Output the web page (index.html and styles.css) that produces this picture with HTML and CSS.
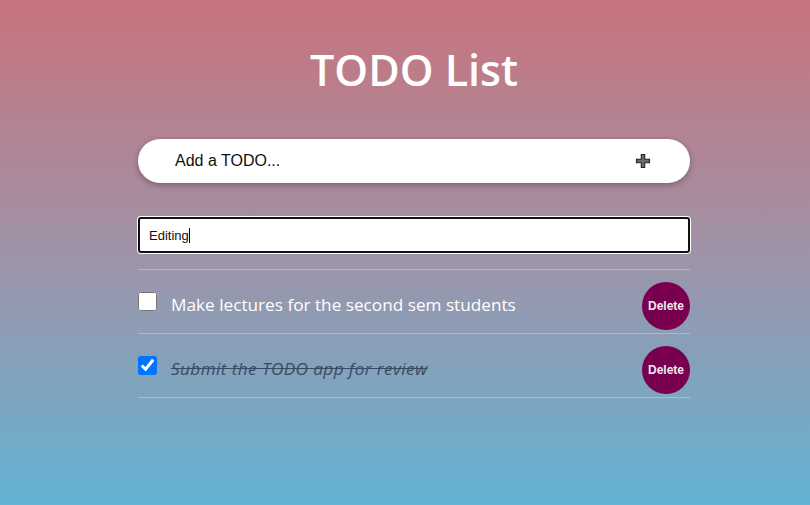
FILE: index.html
```html
<!DOCTYPE html>
<html>
<head>
<meta charset="utf-8">
<link rel="stylesheet" href="styles.css">
</head>
<body>
<div class="app">
  <h1 class="title">TODO List</h1>
  <div class="add-bar">
    <span class="add-text">Add a TODO...</span>
    <svg class="plus" width="16" height="16" viewBox="0 0 16 16">
      <path d="M6.3 1.5h3.4v4.8h4.8v3.4H9.7v4.8H6.3V9.7H1.5V6.3h4.8z" fill="#6b6b6b" stroke="#222" stroke-width="1.1"/>
    </svg>
  </div>
  <div class="edit-box"><span class="edit-text">Editing</span><span class="caret"></span></div>
  <ul class="list">
    <li class="item">
      <input type="checkbox" class="check">
      <span class="label">Make lectures for the second sem students</span>
      <button class="del">Delete</button>
    </li>
    <li class="item">
      <input type="checkbox" class="check" checked>
      <span class="label done">Submit the TODO app for review</span>
      <button class="del">Delete</button>
    </li>
  </ul>
</div>
</body>
</html>
```
FILE: styles.css
```css
html, body {
  margin: 0;
  padding: 0;
}
body {
  min-height: 505px;
  padding-left: 18px;
  box-sizing: border-box;
  background: linear-gradient(to bottom, #c8737d 0%, #9f93a8 50%, #63b3d3 100%);
  font-family: "Open Sans", sans-serif;
}
.app {
  width: 552px;
  margin: 0 auto;
  padding-top: 40px;
}
.title {
  margin: 0;
  text-align: center;
  color: #fff;
  font-family: "Open Sans", sans-serif;
  font-weight: 600;
  font-size: 43px;
  line-height: 60px;
}
.add-bar {
  margin-top: 39px;
  height: 44px;
  background: #fff;
  border-radius: 22px;
  box-shadow: 0 2px 6px rgba(60, 40, 60, 0.45);
  display: flex;
  align-items: center;
  justify-content: space-between;
  padding: 0 39px 0 37px;
}
.add-text {
  font-family: "Liberation Sans", Arial, sans-serif;
  font-size: 16px;
  color: #111;
}
.plus {
  display: block;
}
.edit-box {
  margin-top: 34px;
  height: 36px;
  box-sizing: border-box;
  border: 2px solid #111;
  border-radius: 3px;
  background: #fff;
  box-shadow: 0 0 0 1px #fff;
  display: flex;
  align-items: center;
  padding-left: 9px;
}
.edit-text {
  font-family: "Liberation Sans", Arial, sans-serif;
  font-size: 13px;
  color: #111;
}
.caret {
  width: 1px;
  height: 15px;
  background: #000;
}
.list {
  list-style: none;
  margin: 16px 0 0;
  padding: 0;
  border-top: 1px solid #8cc4ef;
}
.item {
  height: 63px;
  border-bottom: 1px solid #8cc4ef;
  display: flex;
  align-items: center;
}
.check {
  margin: 0;
  width: 19px;
  height: 19px;
  flex: none;
}
.label {
  margin-left: 14px;
  margin-top: 6px;
  flex: 1;
  color: #fff;
  font-family: "Open Sans", sans-serif;
  font-size: 17.2px;
}
.label.done {
  color: #3a4a63;
  font-style: italic;
  letter-spacing: 0.4px;
  text-decoration: line-through;
}
.del {
  width: 48px;
  height: 48px;
  margin-top: 8px;
  border-radius: 50%;
  border: none;
  background: #78004f;
  color: #f3e6f0;
  font-family: "Liberation Sans", Arial, sans-serif;
  font-weight: bold;
  font-size: 12px;
  padding: 0;
}
```
